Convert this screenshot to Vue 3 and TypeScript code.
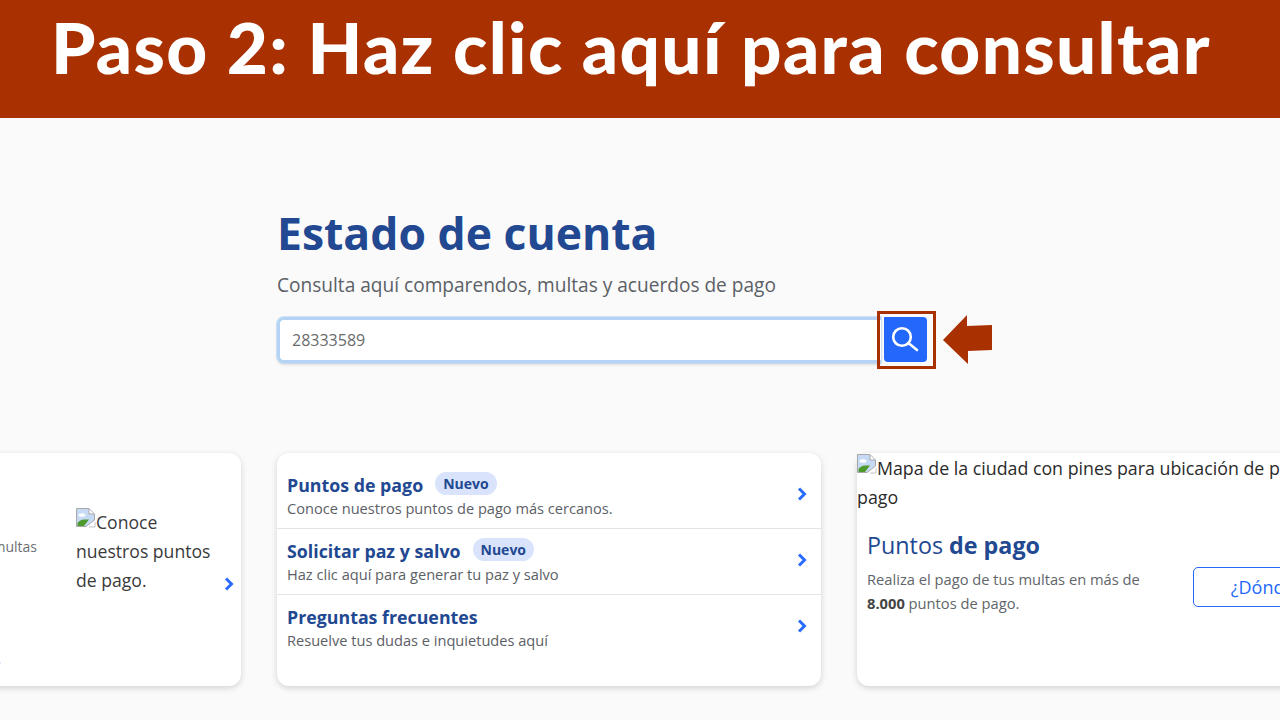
<script setup lang="ts">
interface LinkItem {
  title: string;
  text: string;
  isNew: boolean;
}

const links: LinkItem[] = [
  { title: 'Puntos de pago', text: 'Conoce nuestros puntos de pago más cercanos.', isNew: true },
  { title: 'Solicitar paz y salvo', text: 'Haz clic aquí para generar tu paz y salvo', isNew: true },
  { title: 'Preguntas frecuentes', text: 'Resuelve tus dudas e inquietudes aquí', isNew: false },
];
</script>

<template>
  <div class="page">
    <header class="banner">
      <h1>Paso 2: Haz clic aquí para consultar</h1>
    </header>

    <main class="main">
      <section class="search-area">
        <h2 class="heading">Estado de cuenta</h2>
        <p class="subheading">Consulta aquí comparendos, multas y acuerdos de pago</p>
        <div class="search-row">
          <input class="search-input" type="text" value="28333589" />
          <div class="search-highlight">
            <button class="search-button" type="button" aria-label="Buscar">
              <svg width="30" height="30" viewBox="0 0 30 30" fill="none" stroke="#fff" stroke-width="2.6" stroke-linecap="round">
                <circle cx="11" cy="12" r="8.800" />
                <path d="M18 18.500l8 6.500" />
              </svg>
            </button>
          </div>
          <svg class="arrow" width="50" height="50" viewBox="0 0 50 50">
            <path d="M0 25L24 0V11L49 10V35L25 36V49Z" fill="#a93000" />
          </svg>
        </div>
      </section>

      <section class="cards">
        <article class="card card-left">
          <p class="cut-text">multas</p>
          <div class="broken-wrap">
            <svg class="broken-icon" width="20" height="20" viewBox="0 0 20 20">
              <path d="M0.500 0.500H13L18.500 6V12L10 18.500H0.500Z" fill="#c6d9f5" stroke="#a8a8a8" />
              <ellipse cx="6" cy="7" rx="3.500" ry="1.800" fill="#fff" />
              <path d="M1.500 18V15Q4 11.500 8 11.500L13 11.500L8 18Z" fill="#4f9a2e" />
              <path d="M13 1V6H18" fill="#fff" stroke="#a8a8a8" />
              <path d="M13 19H19V14" fill="none" stroke="#c4c4c4" />
            </svg>Conoce nuestros puntos de pago.
          </div>
          <svg class="chevron chevron-left" width="10" height="14" viewBox="0 0 10 14" fill="none" stroke="#2b6cff" stroke-width="3">
            <path d="M2 1.500L7.500 7L2 12.500" />
          </svg>
          <svg class="chevron chevron-cut" width="10" height="14" viewBox="0 0 10 14" fill="none" stroke="#2b6cff" stroke-width="3">
            <path d="M2 1.500L7.500 7L2 12.500" />
          </svg>
        </article>

        <article class="card card-links">
          <a v-for="link in links" :key="link.title" class="link-row">
            <div class="link-body">
              <div class="link-title">
                <span>{{ link.title }}</span>
                <span v-if="link.isNew" class="badge">Nuevo</span>
              </div>
              <div class="link-text">{{ link.text }}</div>
            </div>
            <svg class="chevron chevron-row" width="10" height="14" viewBox="0 0 10 14" fill="none" stroke="#2b6cff" stroke-width="3">
              <path d="M2 1.500L7.500 7L2 12.500" />
            </svg>
          </a>
        </article>

        <article class="card card-map">
          <div class="map-alt">
            <svg class="broken-icon" width="20" height="20" viewBox="0 0 20 20">
              <path d="M0.500 0.500H13L18.500 6V12L10 18.500H0.500Z" fill="#c6d9f5" stroke="#a8a8a8" />
              <ellipse cx="6" cy="7" rx="3.500" ry="1.800" fill="#fff" />
              <path d="M1.500 18V15Q4 11.500 8 11.500L13 11.500L8 18Z" fill="#4f9a2e" />
              <path d="M13 1V6H18" fill="#fff" stroke="#a8a8a8" />
              <path d="M13 19H19V14" fill="none" stroke="#c4c4c4" />
            </svg>Mapa de la ciudad con pines para ubicación de puntos de pago
          </div>
          <div class="map-body">
            <div class="map-copy">
              <h3 class="map-title">Puntos <strong>de pago</strong></h3>
              <p class="map-text">Realiza el pago de tus multas en más de <strong>8.000</strong> puntos de pago.</p>
            </div>
            <button class="where-button" type="button">¿Dónde pagar?</button>
          </div>
        </article>
      </section>
    </main>
  </div>
</template>

<style>
html,
body {
  margin: 0;
  overflow: hidden;
  background: #fafafa;
}
</style>

<style scoped>
.page {
  width: 1280px;
  height: 720px;
  overflow: hidden;
  background: #fafafa;
  font-family: "Open Sans", "Noto Sans", sans-serif;
}

.banner {
  height: 118px;
  box-sizing: border-box;
  padding: 0 0 26px 51px;
  display: flex;
  align-items: center;
  background: #a93000;
}

.banner h1 {
  margin: 0;
  color: #fff;
  font-family: Lato, sans-serif;
  font-weight: 900;
  font-size: 71px;
  line-height: 1;
  letter-spacing: 1.350px;
  white-space: nowrap;
}

.main {
  display: flex;
  flex-direction: column;
}

.search-area {
  padding: 87px 0 0 277px;
}

.heading {
  margin: 0;
  color: #214891;
  font-size: 44.500px;
  line-height: 56px;
  font-weight: 700;
}

.subheading {
  margin: 11px 0 0;
  color: #5b6066;
  font-size: 19.100px;
  line-height: 26px;
}

.search-row {
  display: flex;
  align-items: center;
  margin-top: 13px;
}

.search-input {
  width: 604px;
  height: 46px;
  margin-top: -1px;
  box-sizing: border-box;
  padding: 0 12px;
  border: 3px solid #b4d3f5;
  border-right: 0;
  border-radius: 7px 0 0 7px;
  background: #fff;
  box-shadow: 0 0 0 1px rgba(180, 211, 245, 0.6), 0 2px 3px rgba(0, 0, 0, 0.12);
  color: #6a6a6a;
  font-family: inherit;
  font-size: 16px;
  outline: none;
}

.search-highlight {
  box-sizing: border-box;
  width: 59px;
  height: 58px;
  margin-left: -4px;
  padding: 3px 6px 4px 4px;
  border: 3px solid #a93000;
  display: flex;
  position: relative;
}

.search-button {
  flex: 1;
  border: 0;
  padding: 0;
  border-radius: 0 4px 4px 4px;
  background: #2468fb;
  display: flex;
  align-items: center;
  justify-content: center;
}

.arrow {
  margin-left: 7px;
}

.cards {
  display: flex;
  gap: 36px;
  margin: 84px 0 0 -303px;
}

.card {
  flex: none;
  width: 544px;
  height: 233px;
  box-sizing: border-box;
  background: #fff;
  border-radius: 12px;
  box-shadow: 0 2px 6px rgba(0, 0, 0, 0.16);
  position: relative;
}

.card-left {
  color: #3a3a3a;
}

.cut-text {
  position: absolute;
  right: 204px;
  top: 84px;
  margin: 0;
  color: #6b6f73;
  font-size: 14px;
}

.broken-wrap {
  position: absolute;
  left: 379px;
  top: 55px;
  width: 145px;
  font-size: 17.600px;
  line-height: 29px;
}

.broken-icon {
  vertical-align: top;
}

.chevron {
  flex: none;
}

.chevron-left {
  position: absolute;
  right: 7px;
  top: 124px;
}

.chevron-cut {
  position: absolute;
  right: 240px;
  top: 203px;
}

.chevron-row {
  margin-top: -2px;
}

.card-links {
  padding-top: 10px;
}

.link-row {
  height: 66px;
  box-sizing: border-box;
  padding: 0 14px 2px 10px;
  display: flex;
  align-items: center;
  justify-content: space-between;
  border-bottom: 1px solid #e4e4e4;
}

.link-row:last-child {
  border-bottom: 0;
}

.link-title {
  display: flex;
  align-items: center;
  gap: 12px;
  color: #214891;
  font-size: 17.800px;
  line-height: 26px;
  font-weight: 700;
}

.badge {
  margin-top: -2px;
  padding: 0 8px;
  border-radius: 12px;
  background: #d9e4fc;
  font-size: 14px;
  line-height: 23px;
}

.link-text {
  color: #5b6066;
  font-size: 14.600px;
  line-height: 20px;
}

.map-alt {
  color: #2a2a2a;
  font-size: 17.800px;
  line-height: 29px;
  padding: 1px 40px 0 0;
}

.map-body {
  display: flex;
  align-items: center;
  padding: 17px 0 0 10px;
}

.map-title {
  margin: 0;
  color: #214891;
  font-size: 23.300px;
  line-height: 32px;
  font-weight: 400;
}

.map-text {
  width: 300px;
  margin: 6px 0 0;
  color: #62666a;
  font-size: 14.700px;
  line-height: 24px;
}

.map-text strong {
  color: #444;
}

.where-button {
  margin: 30px 0 0 26px;
  width: 200px;
  height: 40px;
  flex: none;
  border: 1px solid #2468fb;
  border-radius: 5px;
  background: #fff;
  color: #2468fb;
  font-family: inherit;
  font-size: 18px;
}
</style>
